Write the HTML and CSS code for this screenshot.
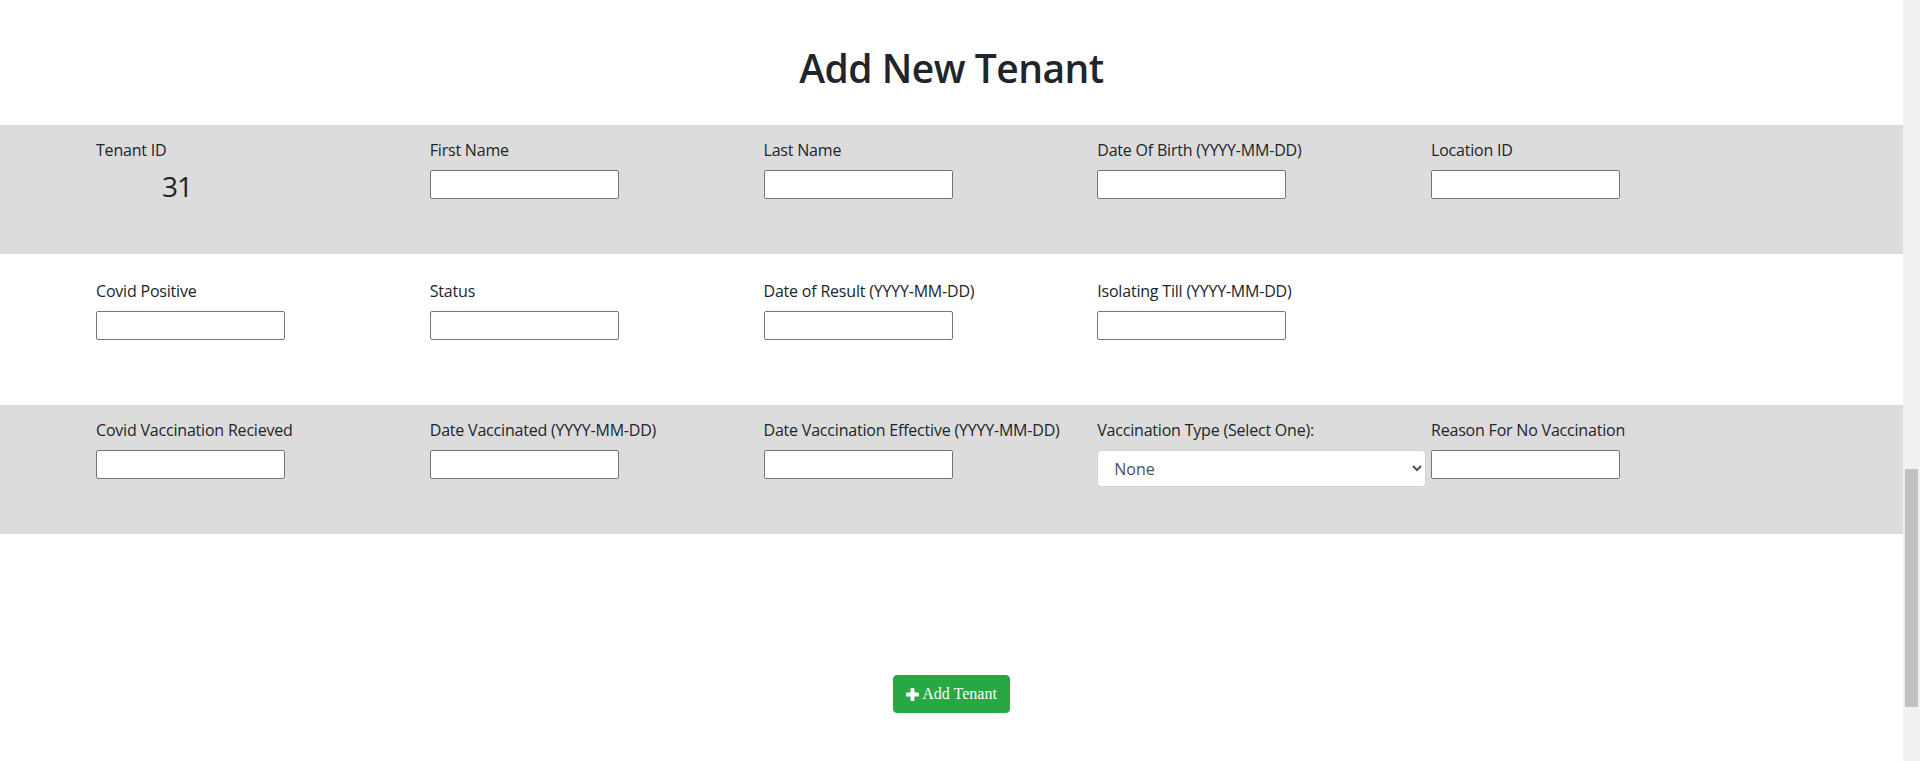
FILE: index.html
```html
<!DOCTYPE html>
<html lang="en">
<head>
<meta charset="utf-8">
<title>Add New Tenant</title>
<link rel="stylesheet" href="styles.css">
</head>
<body>
<div class="window">
  <main class="page">
    <h1 class="title">Add New Tenant</h1>
    <form class="tenant-form">
      <div class="form-row row-a">
        <div class="field">
          <label class="field-label">Tenant ID</label>
          <h3 class="tenant-id">31</h3>
        </div>
        <div class="field">
          <label class="field-label" for="fn">First Name</label>
          <input class="text-input" id="fn" type="text">
        </div>
        <div class="field">
          <label class="field-label" for="ln">Last Name</label>
          <input class="text-input" id="ln" type="text">
        </div>
        <div class="field">
          <label class="field-label" for="dob">Date Of Birth (YYYY-MM-DD)</label>
          <input class="text-input" id="dob" type="text">
        </div>
        <div class="field">
          <label class="field-label" for="loc">Location ID</label>
          <input class="text-input" id="loc" type="text">
        </div>
      </div>
      <div class="form-row row-b">
        <div class="field">
          <label class="field-label" for="cp">Covid Positive</label>
          <input class="text-input" id="cp" type="text">
        </div>
        <div class="field">
          <label class="field-label" for="st">Status</label>
          <input class="text-input" id="st" type="text">
        </div>
        <div class="field">
          <label class="field-label" for="dor">Date of Result (YYYY-MM-DD)</label>
          <input class="text-input" id="dor" type="text">
        </div>
        <div class="field">
          <label class="field-label" for="iso">Isolating Till (YYYY-MM-DD)</label>
          <input class="text-input" id="iso" type="text">
        </div>
      </div>
      <div class="form-row row-c">
        <div class="field">
          <label class="field-label" for="cvr">Covid Vaccination Recieved</label>
          <input class="text-input" id="cvr" type="text">
        </div>
        <div class="field">
          <label class="field-label" for="dv">Date Vaccinated (YYYY-MM-DD)</label>
          <input class="text-input" id="dv" type="text">
        </div>
        <div class="field">
          <label class="field-label" for="dve">Date Vaccination Effective (YYYY-MM-DD)</label>
          <input class="text-input" id="dve" type="text">
        </div>
        <div class="field">
          <label class="field-label" for="vt">Vaccination Type (Select One):</label>
          <select class="select-input" id="vt">
            <option>None</option>
            <option>Pfizer</option>
            <option>Moderna</option>
            <option>AstraZeneca</option>
          </select>
        </div>
        <div class="field">
          <label class="field-label" for="rnv">Reason For No Vaccination</label>
          <input class="text-input" id="rnv" type="text">
        </div>
      </div>
      <div class="actions">
        <button class="btn-add" type="button"><svg class="plus-icon" width="13" height="13" viewBox="0 0 13 13" aria-hidden="true"><rect x="4.5" y="0" width="4" height="13" rx="1" fill="#fff"/><rect x="0" y="4.5" width="13" height="4" rx="1" fill="#fff"/></svg> Add Tenant</button>
      </div>
    </form>
  </main>
  <div class="scrollbar">
    <div class="scroll-thumb"></div>
  </div>
</div>
</body>
</html>
```
FILE: styles.css
```css
* {
  box-sizing: border-box;
}

html, body {
  margin: 0;
  padding: 0;
  height: 100%;
  overflow: hidden;
}

body {
  font-family: "Open Sans", "Noto Sans", sans-serif;
  font-size: 16px;
  line-height: 24px;
  color: #212529;
  background: #fff;
}

.window {
  display: flex;
  height: 761px;
}

.page {
  flex: 1;
  min-width: 0;
}

.title {
  margin: 44px 0 33px;
  font-size: 39px;
  line-height: 48px;
  font-weight: 600;
  letter-spacing: -0.5px;
  text-align: center;
}

.tenant-form {
  margin: 0;
}

.form-row {
  display: grid;
  grid-template-columns: repeat(5, 333.75px);
  padding-left: 96px;
}

.row-a {
  height: 129px;
  padding-top: 13px;
  background: #dcdcdc;
}

.row-b {
  height: 151px;
  padding-top: 25px;
  background: #fff;
}

.row-c {
  height: 129px;
  padding-top: 13px;
  background: #dcdcdc;
}

.field {
  display: flex;
  flex-direction: column;
  align-items: flex-start;
}

.field-label {
  display: block;
  margin-bottom: 8px;
  white-space: nowrap;
  letter-spacing: -0.2px;
}

.tenant-id {
  margin: 0 0 0 66px;
  font-size: 28px;
  line-height: 33.6px;
  font-weight: 500;
  letter-spacing: -1px;
}

.text-input {
  width: 189px;
  height: 29px;
  padding: 1px 2px;
  border: 1px solid #767676;
  border-radius: 2px;
  background: #fff;
  font: inherit;
}

.select-input {
  width: 329px;
  height: 37px;
  padding: 6px 12px;
  border: 1px solid #ced4da;
  border-radius: 4px;
  background-color: #fff;
  color: #495057;
  font: inherit;
}

.actions {
  display: flex;
  justify-content: center;
  margin-top: 141px;
}

.btn-add {
  display: inline-block;
  padding: 6px 12px;
  border: 1px solid #28a745;
  border-radius: 4px;
  background: #28a745;
  color: #fff;
  font-family: "Liberation Serif", "Times New Roman", serif;
  font-size: 16px;
  line-height: 24px;
}

.plus-icon {
  vertical-align: -2px;
}

.scrollbar {
  width: 17px;
  flex: none;
  background: #f0f0f0;
  padding: 469px 2px 0;
}

.scroll-thumb {
  height: 238px;
  background: #c1c1c1;
}
```
